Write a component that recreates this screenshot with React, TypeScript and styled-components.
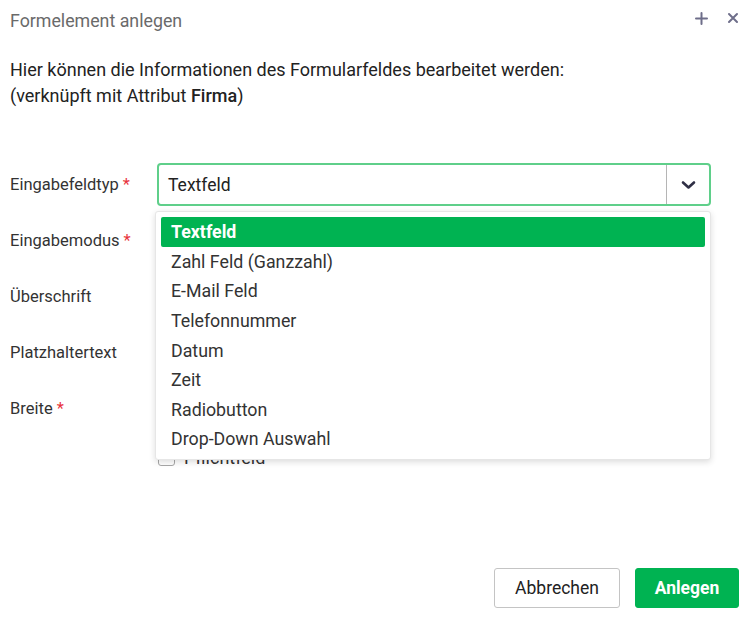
import styled, { createGlobalStyle } from 'styled-components';

const FONT = 'Roboto, "Liberation Sans", Arial, sans-serif';

const GlobalStyle = createGlobalStyle`
  html, body {
    margin: 0;
    padding: 0;
    background: #ffffff;
  }
  body {
    font-family: ${FONT};
    color: #2b2b2b;
  }
`;

const GREEN = '#00b352';

const typeOptions = [
  'Textfeld',
  'Zahl Feld (Ganzzahl)',
  'E-Mail Feld',
  'Telefonnummer',
  'Datum',
  'Zeit',
  'Radiobutton',
  'Drop-Down Auswahl',
];

const otherRows = [
  { label: 'Eingabemodus', required: true },
  { label: 'Überschrift', required: false },
  { label: 'Platzhaltertext', required: false },
  { label: 'Breite', required: true },
];

const PlusIcon = () => (
  <svg width="13" height="13" viewBox="0 0 13 13">
    <path d="M6.5 1v11M1 6.5h11" stroke="#6e6e8a" strokeWidth="2" strokeLinecap="round" />
  </svg>
);

const CloseIcon = () => (
  <svg width="12" height="12" viewBox="0 0 12 12">
    <path d="M2 2l8 8M10 2l-8 8" stroke="#6e6e8a" strokeWidth="2" strokeLinecap="round" />
  </svg>
);

const ChevronIcon = () => (
  <svg width="15" height="10" viewBox="0 0 15 10">
    <path d="M2 2.5l5.5 5 5.5-5" fill="none" stroke="#2f2f45" strokeWidth="2.6" strokeLinecap="round" strokeLinejoin="round" />
  </svg>
);

const App = () => {
  return (
    <>
      <GlobalStyle />
      <Dialog>
        <Header>
          <Title>Formelement anlegen</Title>
          <HeaderActions>
            <IconButton>
              <PlusIcon />
            </IconButton>
            <IconButton>
              <CloseIcon />
            </IconButton>
          </HeaderActions>
        </Header>

        <Body>
          <Description>
            Hier können die Informationen des Formularfeldes bearbeitet werden:
            <br />
            (verknüpft mit Attribut <strong>Firma</strong>)
          </Description>

          <Form>
            <Row>
              <Label>
                Eingabefeldtyp<Required>*</Required>
              </Label>
              <SelectWrap>
                <Select>
                  <SelectValue>Textfeld</SelectValue>
                  <SelectToggle>
                    <ChevronIcon />
                  </SelectToggle>
                </Select>
                <Menu>
                  {typeOptions.map((opt, i) => (
                    <MenuItem key={opt} active={i === 0}>
                      {opt}
                    </MenuItem>
                  ))}
                </Menu>
              </SelectWrap>
            </Row>

            {otherRows.map((row) => (
              <Row key={row.label}>
                <Label>
                  {row.label}
                  {row.required && <Required>*</Required>}
                </Label>
                <Input />
              </Row>
            ))}

            <CheckRow>
              <Checkbox />
              <CheckLabel>Pflichtfeld</CheckLabel>
            </CheckRow>
          </Form>
        </Body>

        <Footer>
          <SecondaryButton>Abbrechen</SecondaryButton>
          <PrimaryButton>Anlegen</PrimaryButton>
        </Footer>
      </Dialog>
    </>
  );
};

const Dialog = styled.div`
  width: 750px;
  height: 622px;
  display: flex;
  flex-direction: column;
  box-sizing: border-box;
  background: #fff;
`;

const Header = styled.div`
  display: flex;
  align-items: center;
  justify-content: space-between;
  height: 40px;
  padding: 0 11px 0 10px;
`;

const Title = styled.div`
  font-size: 17.8px;
  color: #6a6a6a;
`;

const HeaderActions = styled.div`
  display: flex;
  align-items: center;
  gap: 18px;
  margin-top: -4px;
`;

const IconButton = styled.div`
  display: flex;
  align-items: center;
  justify-content: center;
  width: 13px;
  height: 13px;
  cursor: pointer;
`;

const Body = styled.div`
  flex: 1;
  padding: 17px 30px 0 10px;
`;

const Description = styled.p`
  margin: 0;
  font-size: 18px;
  line-height: 26px;
  color: #222;

  strong {
    font-weight: 500;
  }
`;

const Form = styled.div`
  margin-top: 54px;
  margin-right: 9px;
  display: flex;
  flex-direction: column;
`;

const Row = styled.div`
  display: flex;
  align-items: flex-start;
  height: 56px;
`;

const Label = styled.div`
  width: 147px;
  flex-shrink: 0;
  height: 43px;
  display: flex;
  align-items: center;
  font-size: 16.5px;
  color: #333;
`;

const Required = styled.span`
  color: #e8333c;
  margin-left: 4px;
`;

const SelectWrap = styled.div`
  position: relative;
  flex: 1;
`;

const Select = styled.div`
  display: flex;
  align-items: stretch;
  height: 43px;
  box-sizing: border-box;
  border: 2px solid #5fcf8a;
  border-radius: 4px;
  background: #fff;
`;

const SelectValue = styled.div`
  flex: 1;
  display: flex;
  align-items: center;
  padding-left: 9px;
  font-size: 17.5px;
  color: #222;
`;

const SelectToggle = styled.div`
  width: 42px;
  display: flex;
  align-items: center;
  justify-content: center;
  border-left: 1px solid #b5b5b5;
`;

const Menu = styled.div`
  position: absolute;
  top: 48px;
  left: -2px;
  right: 0;
  z-index: 10;
  padding: 5px 5px;
  background: #fff;
  border: 1px solid #e6e6e6;
  border-radius: 3px;
  box-shadow: 0 2px 6px rgba(0, 0, 0, 0.14);
`;

const MenuItem = styled.div<{ active?: boolean }>`
  height: 29.6px;
  display: flex;
  align-items: center;
  padding-left: 10px;
  font-size: 17.8px;
  border-radius: 2px;
  color: ${({ active }) => (active ? '#fff' : '#333')};
  font-weight: ${({ active }) => (active ? 700 : 400)};
  background: ${({ active }) => (active ? GREEN : 'transparent')};
`;

const Input = styled.div`
  flex: 1;
  height: 43px;
  box-sizing: border-box;
  border: 1px solid #c8c8c8;
  border-radius: 4px;
`;

const CheckRow = styled.div`
  display: flex;
  align-items: center;
  gap: 9px;
  margin-top: 4px;
  padding-left: 148px;
`;

const Checkbox = styled.div`
  width: 17px;
  height: 17px;
  box-sizing: border-box;
  border: 1px solid #a8a8a8;
  border-radius: 3px;
  background: #fff;
`;

const CheckLabel = styled.span`
  font-size: 18px;
  color: #333;
`;

const Footer = styled.div`
  display: flex;
  justify-content: flex-end;
  gap: 15px;
  padding: 0 11px 14px 0;
`;

const ButtonBase = styled.button`
  height: 40px;
  box-sizing: border-box;
  border-radius: 3px;
  font-family: ${FONT};
  font-size: 17.5px;
  cursor: pointer;
`;

const SecondaryButton = styled(ButtonBase)`
  width: 126px;
  background: #fff;
  color: #222;
  border: 1px solid #c4c4c4;
`;

const PrimaryButton = styled(ButtonBase)`
  width: 104px;
  background: ${GREEN};
  color: #fff;
  font-weight: 700;
  border: 1px solid ${GREEN};
`;

export default App;
